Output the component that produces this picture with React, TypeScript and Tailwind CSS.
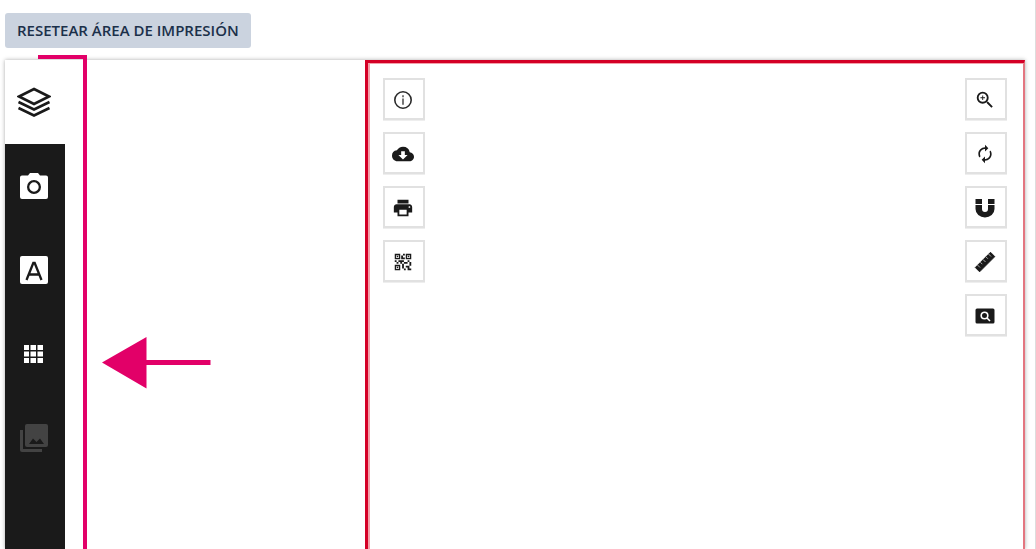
import type { ReactNode } from "react";
import { MdAutorenew, MdCloudDownload, MdPrint, MdQrCode2, MdZoomIn } from "react-icons/md";

type Tool = { label: string; icon: ReactNode };

const tabs: Tool[] = [
  {
    label: "Fotos",
    icon: (
      <svg viewBox="0 0 30 28" className="h-7 w-[30px]" aria-hidden="true">
        <path fill="#fff" fillRule="evenodd" d="M3 3.5h6L11 1h8l2 2.5h6a2 2 0 0 1 2 2V25a2 2 0 0 1-2 2H3a2 2 0 0 1-2-2V5.500a2 2 0 0 1 2-2zM15 8a7 7 0 1 0 0 14 7 7 0 0 0 0-14zm0 2.300a4.700 4.700 0 1 1 0 9.400 4.700 4.700 0 0 1 0-9.400z" />
      </svg>
    ),
  },
  {
    label: "Texto",
    icon: (
      <svg viewBox="0 0 30 30" className="h-[30px] w-[30px]" aria-hidden="true">
        <rect x="1" y="1" width="28" height="28" rx="2" fill="#fff" />
        <path fill="none" stroke="#1a1a1a" strokeWidth="2.300" d="M7.500 25 14.300 8h1.400l6.800 17M10 19.500h10" />
      </svg>
    ),
  },
  {
    label: "Tablas",
    icon: (
      <svg viewBox="0 0 20 18" className="h-[18px] w-5" fill="#fff" aria-hidden="true">
        <path d="M0 0h5v5H0zM6.500 0h5.500v5H6.500zM13.500 0h5.500v5h-5.500zM0 6.500h5v5H0zM6.500 6.500h5.500v5H6.500zM13.500 6.500h5.500v5h-5.500zM0 13h5v5H0zM6.500 13h5.500v5H6.500zM13.500 13h5.500v5h-5.500z" />
      </svg>
    ),
  },
  {
    label: "Galería",
    icon: (
      <svg viewBox="0 0 30 30" className="h-[30px] w-[30px]" fill="#434343" aria-hidden="true">
        <path d="M1 7h3v19h19v3H3a2 2 0 0 1-2-2z" />
        <path fillRule="evenodd" d="M8 1h19a2 2 0 0 1 2 2v19a2 2 0 0 1-2 2H8a2 2 0 0 1-2-2V3a2 2 0 0 1 2-2zm2 20h15l-4-5.500-3.500 3.500-3.500-3.500z" />
      </svg>
    ),
  },
];

const leftTools: Tool[] = [
  {
    label: "Información",
    icon: (
      <svg viewBox="0 0 22 22" className="h-[22px] w-[22px]" aria-hidden="true">
        <circle cx="11" cy="11" r="8.200" fill="none" stroke="#2b2b2b" strokeWidth="1.600" />
        <path fill="none" stroke="#555" strokeWidth="1.600" d="M11 6.200v2M11 9.500v6.300" />
      </svg>
    ),
  },
  { label: "Descargar", icon: <MdCloudDownload className="h-[22px] w-[22px]" /> },
  { label: "Imprimir", icon: <MdPrint className="h-[22px] w-[22px]" /> },
  { label: "Código QR", icon: <MdQrCode2 className="h-[22px] w-[22px]" /> },
];

const rightTools: Tool[] = [
  { label: "Acercar", icon: <MdZoomIn className="h-[22px] w-[22px]" /> },
  { label: "Restablecer", icon: <MdAutorenew className="h-5 w-5" /> },
  {
    label: "Imán",
    icon: (
      <svg viewBox="0 0 20 20" className="h-5 w-5" fill="currentColor" aria-hidden="true">
        <path d="M.500 1h6.500v5H.500zM13 1h6.500v5H13zM.500 7H7v4a3 3 0 0 0 6 0V7h6.500v4a9.500 8.500 0 0 1-19 0z" />
      </svg>
    ),
  },
  {
    label: "Regla",
    icon: (
      <svg viewBox="0 0 22 22" className="h-[22px] w-[22px]" aria-hidden="true">
        <path fill="#1a1a1a" stroke="#1a1a1a" strokeLinejoin="round" d="M1.300 16.500 16.500 1.300l4.300 4.300L5.600 20.800z" />
        <path fill="none" stroke="#aaa" strokeWidth="1" d="m3.500 14 2.500 2.500M6.300 11.200l2 2M9 8.500l2.500 2.500M11.800 5.700l2 2M14.500 3 17 5.500" />
      </svg>
    ),
  },
  {
    label: "Vista previa",
    icon: (
      <svg viewBox="0 0 20 16" className="h-4 w-5" aria-hidden="true">
        <rect x=".5" y=".5" width="19" height="15" rx="1.500" fill="#1a1a1a" />
        <circle cx="9.500" cy="7.500" r="3.300" fill="none" stroke="#fff" strokeWidth="1.600" />
        <path stroke="#fff" strokeWidth="1.600" d="m12 10 3 3" />
      </svg>
    ),
  },
];

function ToolColumn({ tools }: { tools: Tool[] }) {
  return (
    <div className="flex flex-col gap-3">
      {tools.map((tool) => (
        <button
          key={tool.label}
          type="button"
          aria-label={tool.label}
          className="flex h-[42px] w-[42px] items-center justify-center border-2 border-[#e1e1e1] bg-white pt-0.5 pr-0.5 text-[#1a1a1a] shadow-[0_1px_0_#eeeeee]"
        >
          {tool.icon}
        </button>
      ))}
    </div>
  );
}

export default function App() {
  return (
    <div className="relative flex h-screen flex-col overflow-hidden border-r border-[#dddddd] bg-white pr-2.5 pl-[5px] font-['Open_Sans',sans-serif]">
      <header className="flex shrink-0 pt-[13px] pb-3">
        <button
          type="button"
          className="h-[35px] rounded-[3px] bg-[#cbd3df] px-3 text-[15px] font-semibold whitespace-nowrap text-[#1b304a]"
        >
          RESETEAR ÁREA DE IMPRESIÓN
        </button>
      </header>

      <main className="flex min-h-0 flex-1 shadow-[0_0_4px_#aaaaaa]">
        <nav className="flex w-[60px] shrink-0 flex-col bg-[#1a1a1a]">
          <button type="button" aria-label="Capas" className="flex h-[84px] shrink-0 items-center justify-center bg-white pr-0.5">
            <svg viewBox="0 0 34 30" className="h-[30px] w-[34px]" fill="none" stroke="#1a1a1a" strokeWidth="2.600" aria-hidden="true">
              <path d="M17 2 32 9.500 17 17 2 9.500zM1.500 15 17 22.500 32.500 15M1.500 21 17 28.500 32.500 21" />
            </svg>
          </button>
          {tabs.map((tab) => (
            <button key={tab.label} type="button" aria-label={tab.label} className="flex h-[84px] shrink-0 items-center justify-center pr-0.5">
              {tab.icon}
            </button>
          ))}
        </nav>

        <section className="w-[300px] shrink-0 bg-white" />

        <section className="flex min-w-0 flex-1 border-t-[3px] border-r border-l-[3px] border-t-[#d40026] border-r-[#e37680] border-l-[#d40026]">
          <div className="flex flex-1 items-start justify-between border-t border-r border-l-2 border-t-[#f3a0aa] border-r-[#e37680] border-l-[#f3a0aa] bg-white pt-3.5 pr-4 pl-[13px]">
            <ToolColumn tools={leftTools} />
            <ToolColumn tools={rightTools} />
          </div>
        </section>
      </main>

      {/* callout drawn over the sidebar */}
      <div className="pointer-events-none absolute top-[55px] bottom-0 left-[38px] w-[49px] border-t-4 border-r-4 border-[#e20068]" />
      <svg viewBox="0 0 109 52" className="pointer-events-none absolute top-[337px] left-[102px] h-[52px] w-[109px]" fill="#e20068" aria-hidden="true">
        <path d="M0 25.500 44.500 0v23H108.500v5H44.500v23.500z" />
      </svg>
    </div>
  );
}
